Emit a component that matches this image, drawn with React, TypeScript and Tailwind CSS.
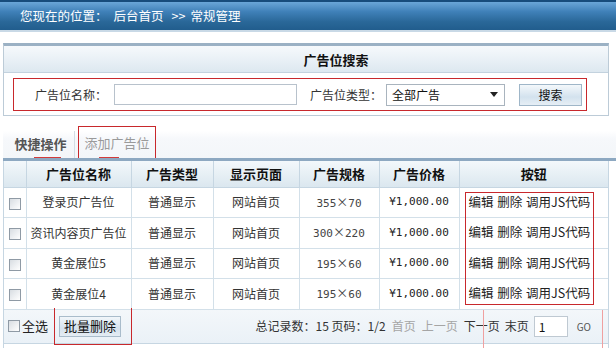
import React from "react";

const rows = [
  { name: "登录页广告位", type: "普通显示", page: "网站首页", w: "355", h: "70", price: "¥1,000.00" },
  { name: "资讯内容页广告位", type: "普通显示", page: "网站首页", w: "300", h: "220", price: "¥1,000.00" },
  { name: "黄金展位5", type: "普通显示", page: "网站首页", w: "195", h: "60", price: "¥1,000.00" },
  { name: "黄金展位4", type: "普通显示", page: "网站首页", w: "195", h: "60", price: "¥1,000.00" },
];

function Check() {
  return (
    <span className="inline-block w-[12px] h-[12px] border border-[#8f9aa5] bg-[linear-gradient(135deg,#d8dde2,#ffffff)] align-middle" />
  );
}

export default function App() {
  return (
    <div className="w-[616px] h-[348px] overflow-hidden bg-white text-[12px] text-[#333] font-['Noto_Sans_CJK_SC',sans-serif]">
      {/* 位置栏 */}
      <div className="h-[32px] border-t-2 border-t-[#174c7c] border-b-2 border-b-[#c9d9e6] bg-[linear-gradient(to_bottom,#6aa6d8,#3f80b8_35%,#2a6899_70%,#215d8d)] flex items-center pl-[20px] text-white text-[12.5px] whitespace-nowrap">
        <span>您现在的位置：</span>
        <span className="ml-[6px]">后台首页</span>
        <span className="ml-[8px]">&gt;&gt;</span>
        <span className="ml-[5px]">常规管理</span>
      </div>

      {/* 广告位搜索 */}
      <div className="mt-[11px] mx-[3px] w-[606px] border border-[#bccbd7] border-t-[3px] border-t-[#9bb1c4]">
        <div className="h-[27px] border-b border-[#c3d2de] bg-[linear-gradient(to_bottom,#f6f9fc,#dde8f0)] flex items-center justify-center pl-[60px] pt-[2px] font-bold text-[13px] text-[#111]">
          广告位搜索
        </div>
        <div className="h-[42px] pt-[5px] pl-[9px]">
          <div className="w-[574px] h-[33px] border border-[#c8282c] flex items-center pl-[21px] text-[#333] whitespace-nowrap">
            <span className="shrink-0">广告位名称：</span>
            <input className="ml-[7px] w-[183px] h-[21px] shrink-0 border border-[#b8c2cc] bg-white" />
            <span className="ml-[13px] shrink-0">广告位类型：</span>
            <div className="ml-[4px] w-[119px] h-[22px] shrink-0 border border-[#a9b4be] bg-white flex items-center justify-between pl-[5px] pr-[6px] text-[#111]">
              <span>全部广告</span>
              <span className="w-0 h-0 border-l-[4px] border-r-[4px] border-t-[5px] border-l-transparent border-r-transparent border-t-[#222]" />
            </div>
            <div className="ml-[14px] w-[63px] h-[22px] shrink-0 border border-[#9fb6c8] bg-[linear-gradient(to_bottom,#f4f8fb,#d3e2ee_60%,#e6eef5)] flex items-center justify-center text-[#111]">
              搜索
            </div>
          </div>
        </div>
      </div>

      {/* 选项卡 */}
      <div className="mt-[10px] ml-[3px] h-[32px] flex items-end bg-[linear-gradient(to_bottom,#ffffff,#ffffff_15%,#f6f8fb_40%,#f3f6f9)] relative">
        <div className="ml-[4px] w-[68px] h-[27px] pb-[2px] border-r border-[#d5dde4] flex items-center justify-center font-bold text-[13px] text-[#555]">
          快捷操作
        </div>
        <div className="ml-[3px] w-[78px] h-[32px] border border-b-0 border-[#c8282c] flex items-end justify-center pb-[6px] text-[13px] text-[#9a9a9a]">
          添加广告位
        </div>
        <span className="absolute left-[31px] bottom-0 w-[27px] h-[1px] bg-[#d23a3a]" />
        <span className="absolute left-[96px] bottom-0 w-[20px] h-[1px] bg-[#d23a3a]" />
      </div>
      <div className="ml-[3px] h-[3px] bg-[#8da8c1]" />

      {/* 列表 */}
      <div className="ml-[3px] w-[606px] relative border-l border-r border-[#c6d6e2]">
        <table className="w-full border-collapse table-fixed">
          <colgroup>
            <col className="w-[22px]" />
            <col className="w-[105px]" />
            <col className="w-[82px]" />
            <col className="w-[86px]" />
            <col className="w-[80px]" />
            <col className="w-[80px]" />
            <col />
          </colgroup>
          <thead>
            <tr className="h-[26px] bg-[linear-gradient(to_bottom,#f3f8fb,#dbe7ef)] text-[13px] font-bold text-[#111]">
              <th className="border-r border-b border-[#c6d6e2]" />
              <th className="border-r border-b border-[#c6d6e2] font-bold">广告位名称</th>
              <th className="border-r border-b border-[#c6d6e2] font-bold">广告类型</th>
              <th className="border-r border-b border-[#c6d6e2] font-bold">显示页面</th>
              <th className="border-r border-b border-[#c6d6e2] font-bold">广告规格</th>
              <th className="border-r border-b border-[#c6d6e2] font-bold">广告价格</th>
              <th className="border-b border-[#c6d6e2] font-bold">按钮</th>
            </tr>
          </thead>
          <tbody>
            {rows.map((r) => (
              <tr key={r.name} className="h-[30.5px] text-[#333]">
                <td className="border-r border-b border-[#d3e0e9] text-center">
                  <Check />
                </td>
                <td className="border-r border-b border-[#d3e0e9] text-center whitespace-nowrap">{r.name}</td>
                <td className="border-r border-b border-[#d3e0e9] text-center">{r.type}</td>
                <td className="border-r border-b border-[#d3e0e9] text-center">{r.page}</td>
                <td className="border-r border-b border-[#d3e0e9] text-center text-[#444] whitespace-nowrap">
                  <span className="font-['DejaVu_Sans_Mono',monospace] text-[11px]">{r.w}</span>
                  <span className="text-[12px]">×</span>
                  <span className="font-['DejaVu_Sans_Mono',monospace] text-[11px]">{r.h}</span>
                </td>
                <td className="border-r border-b border-[#d3e0e9] text-center font-['DejaVu_Sans_Mono',monospace] text-[11px] text-[#222]">{r.price}</td>
                <td className="border-b border-[#d3e0e9] pl-[9px] whitespace-nowrap text-[#222] text-[12.5px] [word-spacing:1px]">
                  编辑 删除 调用JS代码
                </td>
              </tr>
            ))}
          </tbody>
        </table>
        <div className="absolute left-[461px] top-[31px] w-[129px] h-[113px] border border-[#c8282c]" />
      </div>

      {/* 底部 */}
      <div className="ml-[3px] w-[606px] h-[33px] border-l border-r border-[#c6d6e2] bg-[linear-gradient(to_bottom,#f3f7fa,#eaf1f7)] flex items-center relative">
        <div className="ml-[4px] flex items-center">
          <Check />
          <span className="ml-[2px] text-[13px] text-[#222]">全选</span>
        </div>
        <div className="ml-[11px] w-[62px] h-[21px] border border-[#a9bccb] bg-[linear-gradient(to_bottom,#f1f6fa,#d6e3ee_60%,#e4ecf3)] flex items-center justify-center text-[13px] text-[#111]">
          批量删除
        </div>
        <div className="ml-auto mr-[17px] flex items-center text-[12px] text-[#333] whitespace-nowrap">
          <span>总记录数：15 页码：1/2</span>
          <span className="ml-[6px] text-[#a5a5a5]">首页</span>
          <span className="ml-[6px] text-[#a5a5a5]">上一页</span>
          <span className="ml-[6px]">下一页</span>
          <span className="ml-[5px]">末页</span>
          <span className="ml-[5px] w-[34px] h-[21px] border border-[#bfc9d2] bg-white pl-[4px] leading-[19px] text-[#111]">1</span>
          <span className="ml-[9px] text-[10px] text-[#555]">GO</span>
        </div>
        <div className="absolute left-[50px] top-[-2px] w-[78px] h-[37px] border border-t-0 border-[#c8282c]" />
        <div className="absolute left-[479px] top-0 w-[120px] h-[40px] border-l border-r border-[#f0a0a0]" />
      </div>
      <div className="ml-[3px] w-[606px] h-[6px] border-l border-r border-t border-[#c6d6e2]" />
    </div>
  );
}
